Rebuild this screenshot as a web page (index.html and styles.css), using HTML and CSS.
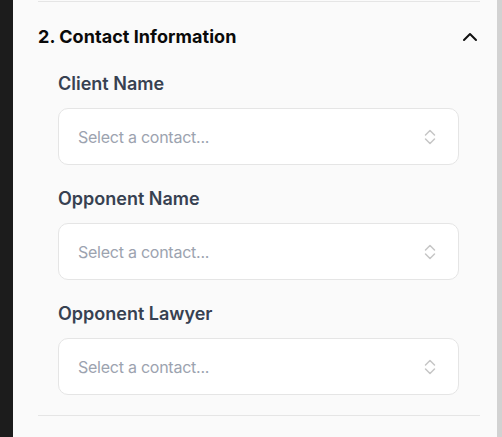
FILE: index.html
```html
<!DOCTYPE html>
<html lang="en">
<head>
    <meta charset="UTF-8">
    <meta name="viewport" content="width=device-width, initial-scale=1.0">
    <title>Contact Information</title>
    <link rel="stylesheet" href="styles.css">
</head>
<body>
    <div class="sidebar-edge"></div>

    <div class="panel">
        <section class="section">
            <div class="section-header">
                <h2>2. Contact Information</h2>
                <svg class="chevron" width="24" height="24" viewBox="0 0 24 24" fill="none" stroke="#111" stroke-width="2" stroke-linecap="round" stroke-linejoin="round">
                    <path d="M6 15l6-6 6 6"/>
                </svg>
            </div>

            <div class="section-body">
                <div class="field">
                    <label>Client Name</label>
                    <div class="select">
                        <span class="placeholder">Select a contact...</span>
                        <svg class="updown" width="12" height="16" viewBox="0 0 12 16" fill="none" stroke="#c6c6c6" stroke-width="1.5" stroke-linecap="round" stroke-linejoin="round">
                            <path d="M1.5 6L6 1.5 10.5 6"/>
                            <path d="M1.5 10L6 14.5 10.5 10"/>
                        </svg>
                    </div>
                </div>

                <div class="field">
                    <label>Opponent Name</label>
                    <div class="select">
                        <span class="placeholder">Select a contact...</span>
                        <svg class="updown" width="12" height="16" viewBox="0 0 12 16" fill="none" stroke="#c6c6c6" stroke-width="1.5" stroke-linecap="round" stroke-linejoin="round">
                            <path d="M1.5 6L6 1.5 10.5 6"/>
                            <path d="M1.5 10L6 14.5 10.5 10"/>
                        </svg>
                    </div>
                </div>

                <div class="field">
                    <label>Opponent Lawyer</label>
                    <div class="select">
                        <span class="placeholder">Select a contact...</span>
                        <svg class="updown" width="12" height="16" viewBox="0 0 12 16" fill="none" stroke="#c6c6c6" stroke-width="1.5" stroke-linecap="round" stroke-linejoin="round">
                            <path d="M1.5 6L6 1.5 10.5 6"/>
                            <path d="M1.5 10L6 14.5 10.5 10"/>
                        </svg>
                    </div>
                </div>
            </div>
        </section>
    </div>

    <div class="scroll-track"></div>
</body>
</html>
```

FILE: styles.css
```css
* {
    margin: 0;
    padding: 0;
    box-sizing: border-box;
}

body {
    font-family: Inter, "Noto Sans", sans-serif;
    background: #fafafa;
    height: 100vh;
    display: flex;
    overflow: hidden;
}

.sidebar-edge {
    width: 13px;
    background: #1c1c1c;
}

.scroll-track {
    width: 5px;
    background: #d2d2d2;
}

.panel {
    flex: 1;
    background: #fafafa;
    padding: 0 17px 0 25px;
}

.section {
    margin-top: 1px;
    border-top: 1px solid #e5e5e5;
    border-bottom: 1px solid #e5e5e5;
}

.section-header {
    display: flex;
    align-items: center;
    justify-content: space-between;
    padding: 23px 0 23px 0;
    height: 70px;
}

.section-header h2 {
    font-size: 18px;
    line-height: 24px;
    font-weight: 700;
    color: #0a0a0a;
    letter-spacing: 0.05px;
}

.chevron {
    margin-right: -2px;
}

.section-body {
    padding: 0 21px 20px 20px;
    display: flex;
    flex-direction: column;
    gap: 22px;
}

.field label {
    display: block;
    font-size: 18px;
    line-height: 24px;
    font-weight: 600;
    color: #374151;
    margin-bottom: 12px;
    letter-spacing: 0;
}

.select {
    height: 57px;
    background: white;
    border: 1px solid #e5e5e5;
    border-radius: 10px;
    display: flex;
    align-items: center;
    justify-content: space-between;
    padding: 0 22px 0 19px;
}

.placeholder {
    font-size: 16px;
    color: #9ca3af;
    letter-spacing: -0.25px;
}
```
